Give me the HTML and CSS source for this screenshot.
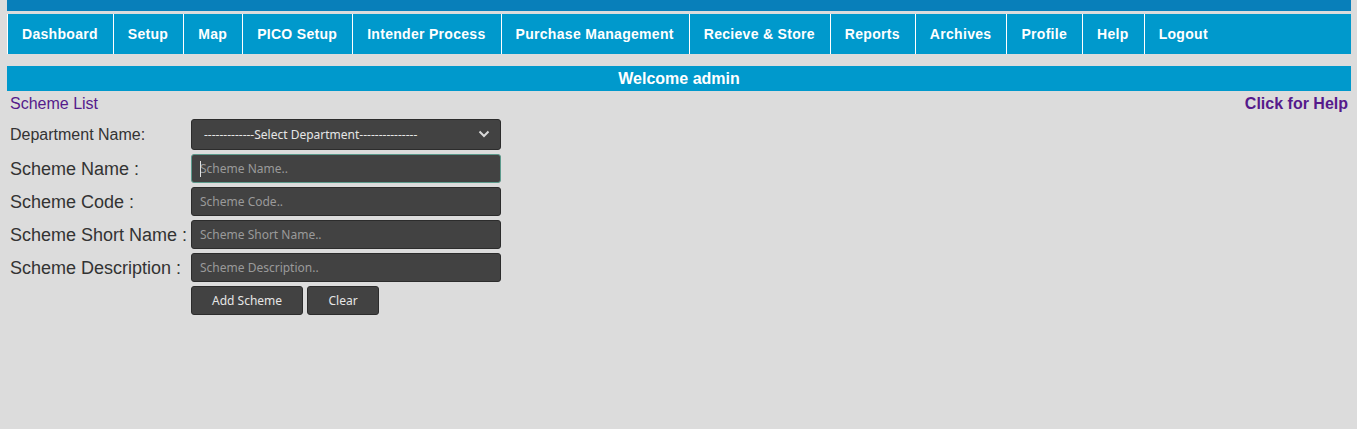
FILE: index.html
```html
<!DOCTYPE html>
<html lang="en">
<head>
<meta charset="utf-8">
<title>Scheme List</title>
<link rel="stylesheet" href="styles.css">
</head>
<body>
<div class="page">
  <div class="topbar"></div>
  <nav class="nav">
    <a class="nav-item" href="#">Dashboard</a>
    <a class="nav-item" href="#">Setup</a>
    <a class="nav-item" href="#">Map</a>
    <a class="nav-item" href="#">PICO Setup</a>
    <a class="nav-item" href="#">Intender Process</a>
    <a class="nav-item" href="#">Purchase Management</a>
    <a class="nav-item" href="#">Recieve &amp; Store</a>
    <a class="nav-item" href="#">Reports</a>
    <a class="nav-item" href="#">Archives</a>
    <a class="nav-item" href="#">Profile</a>
    <a class="nav-item" href="#">Help</a>
    <a class="nav-item" href="#">Logout</a>
  </nav>
  <div class="welcome">Welcome admin</div>
  <div class="subhead">
    <a class="scheme-link" href="#">Scheme List</a>
    <a class="help-link" href="#">Click for Help</a>
  </div>
  <form class="form">
    <label class="label label-sm">Department Name:</label>
    <div class="select-wrap">
      <select class="select">
        <option>-------------Select Department---------------</option>
      </select>
      <svg class="chevron" width="12" height="8" viewBox="0 0 12 8"><path d="M1.5 1.5 L6 6 L10.5 1.5" fill="none" stroke="#d8d8d8" stroke-width="2"/></svg>
    </div>
    <label class="label">Scheme Name :</label>
    <div class="input-wrap">
      <input class="input focused" type="text" placeholder="Scheme Name..">
      <span class="caret"></span>
    </div>
    <label class="label">Scheme Code :</label>
    <input class="input" type="text" placeholder="Scheme Code..">
    <label class="label">Scheme Short Name :</label>
    <input class="input" type="text" placeholder="Scheme Short Name..">
    <label class="label">Scheme Description :</label>
    <input class="input" type="text" placeholder="Scheme Description..">
    <span></span>
    <div class="buttons">
      <button class="btn" type="button">Add Scheme</button>
      <button class="btn btn-clear" type="button">Clear</button>
    </div>
  </form>
</div>
</body>
</html>
```
FILE: styles.css
```css
* { box-sizing: border-box; }
html, body {
  margin: 0;
  padding: 0;
  background: #dcdcdc;
  height: 100%;
}
body {
  font-family: "Liberation Sans", Arial, sans-serif;
  color: #333;
}
.page {
  margin: 0 6px 0 7px;
}
.topbar {
  height: 11px;
  background: #087fba;
}
.nav {
  margin-top: 3px;
  height: 40px;
  background: #0099cc;
  display: flex;
  align-items: stretch;
}
.nav-item {
  display: flex;
  align-items: center;
  padding: 0 15px 0 14px;
  border-left: 1px solid #ffffff;
  color: #ffffff;
  font-weight: bold;
  font-size: 14px;
  letter-spacing: 0.3px;
  text-decoration: none;
  white-space: nowrap;
}
.welcome {
  margin-top: 12px;
  height: 25px;
  background: #0099cc;
  color: #ffffff;
  font-weight: bold;
  font-size: 16px;
  display: flex;
  align-items: center;
  justify-content: center;
}
.subhead {
  display: flex;
  justify-content: space-between;
  align-items: center;
  padding: 3px 3px 0 3px;
  height: 23px;
  font-size: 16px;
}
.scheme-link {
  color: #551a8b;
  text-decoration: none;
}
.help-link {
  color: #551a8b;
  font-weight: bold;
  text-decoration: none;
}
.form {
  margin-top: 5px;
  padding-left: 3px;
  display: grid;
  grid-template-columns: 181px 310px;
  grid-template-rows: 31px;
  grid-auto-rows: 29px;
  row-gap: 4px;
  align-items: center;
}
.label {
  font-size: 18px;
  color: #333;
  white-space: nowrap;
  padding-top: 2px;
}
.label-sm {
  font-size: 16px;
  padding-top: 1px;
}
.select-wrap {
  position: relative;
  height: 31px;
}
.select {
  -webkit-appearance: none;
  appearance: none;
  width: 100%;
  height: 31px;
  margin: 0;
  background: #424242;
  border: 1px solid #2c2c2c;
  border-radius: 3px;
  color: #e6e6e6;
  font-family: "Noto Sans", "Open Sans", sans-serif;
  font-size: 12px;
  padding: 0 30px 0 12px;
  outline: none;
}
.chevron {
  position: absolute;
  right: 11px;
  top: 11px;
  pointer-events: none;
}
.input-wrap {
  position: relative;
  height: 29px;
}
.input {
  width: 100%;
  height: 29px;
  margin: 0;
  background: #424242;
  border: 1px solid #2c2c2c;
  border-radius: 3px;
  color: #e6e6e6;
  font-family: "Noto Sans", "Open Sans", sans-serif;
  font-size: 12px;
  padding: 0 8px;
  outline: none;
}
.input::placeholder {
  color: #9a9a9a;
  opacity: 1;
}
.input.focused {
  border-color: #5c9a8c;
}
.caret {
  position: absolute;
  left: 9px;
  top: 7px;
  width: 1px;
  height: 16px;
  background: #e0e0e0;
}
.buttons {
  display: flex;
  gap: 4px;
  height: 29px;
}
.btn {
  height: 29px;
  padding: 0 20px;
  background: #424242;
  border: 1px solid #2c2c2c;
  border-radius: 3px;
  color: #e6e6e6;
  font-family: "Noto Sans", "Open Sans", sans-serif;
  font-size: 12px;
  cursor: pointer;
}
.btn-clear {
  width: 72px;
}
```
